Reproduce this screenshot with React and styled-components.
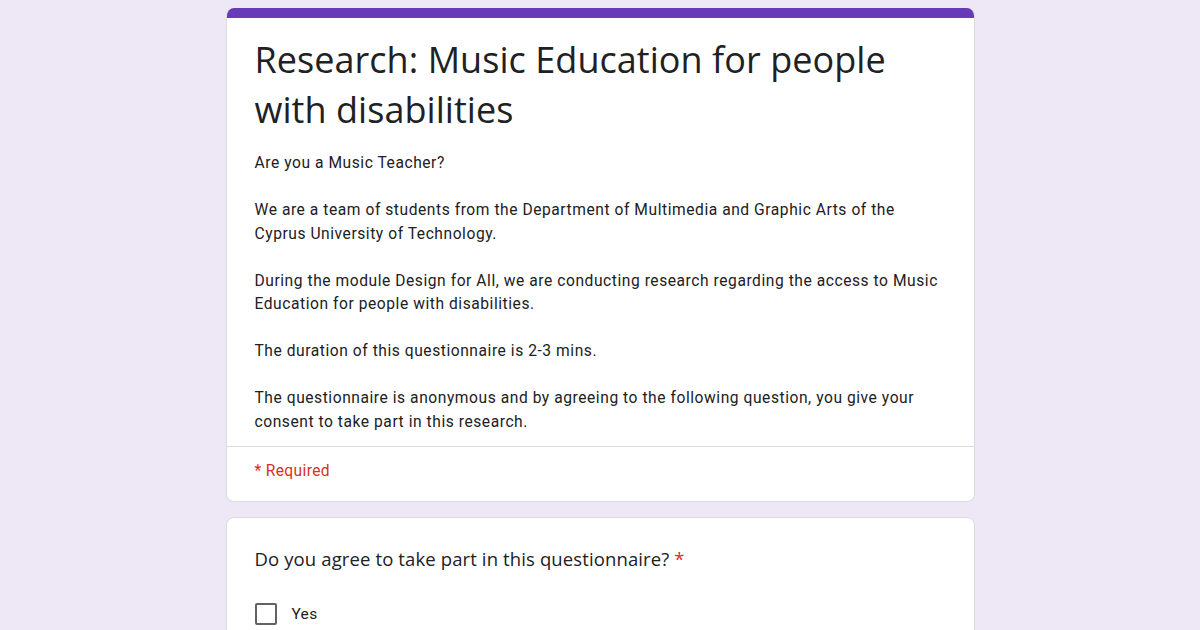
import React from "react";
import styled, { createGlobalStyle } from "styled-components";

const Global = createGlobalStyle`
  html, body { margin: 0; padding: 0; background: #ede7f6; }
  body { font-family: Roboto, "Liberation Sans", sans-serif; }
`;

const Page = styled.div`
  width: 1200px;
  height: 630px;
  overflow: hidden;
  background: #ede7f6;
  display: flex;
  flex-direction: column;
  align-items: center;
  padding-top: 8px;
  gap: 15px;
  box-sizing: border-box;
`;

const Card = styled.div`
  width: 749px;
  box-sizing: border-box;
  background: #fff;
  border: 1px solid #dadce0;
  border-radius: 8px;
  overflow: hidden;
  flex-shrink: 0;
`;

const HeaderCard = styled(Card)`
  border-top: none;
`;

const AccentBar = styled.div`
  height: 10px;
  background: #673ab7;
`;

const HeaderBody = styled.div`
  padding: 17px 28px 8px;
`;

const Title = styled.h1`
  margin: 0;
  font-family: "Open Sans", sans-serif;
  font-weight: 400;
  font-size: 36px;
  line-height: 50px;
  color: #202124;
  letter-spacing: 0.05px;
`;

const Description = styled.div`
  margin-top: 17px;
  font-family: Roboto, sans-serif;
  font-size: 15.6px;
  line-height: 23.5px;
  color: #202124;
  letter-spacing: 0.55px;
`;

const Para = styled.p`
  margin: 0 0 23.5px;
  &:last-child { margin-bottom: 0; }
`;

const Divider = styled.div`
  height: 1px;
  background: #dadce0;
  margin-top: 4px;
`;

const Required = styled.div`
  padding: 13px 28px 18px;
  font-family: Roboto, sans-serif;
  font-size: 15.6px;
  line-height: 23px;
  color: #d93025;
  letter-spacing: 0.35px;
`;

const QuestionBody = styled.div`
  padding: 29px 28px 24px;
`;

const Question = styled.div`
  font-family: "Open Sans", sans-serif;
  font-size: 18.5px;
  line-height: 24px;
  color: #202124;
  letter-spacing: 0.12px;
`;

const Star = styled.span`
  color: #d93025;
`;

const Option = styled.label`
  display: flex;
  align-items: center;
  gap: 15px;
  margin-top: 32px;
  font-family: Roboto, sans-serif;
  font-size: 15.5px;
  color: #202124;
  letter-spacing: 0.3px;
`;

const Box = styled.span`
  width: 18px;
  height: 18px;
  border: 2px solid #5f6368;
  border-radius: 2px;
  flex-shrink: 0;
`;

export default function App() {
  return (
    <>
      <Global />
      <Page>
        <HeaderCard>
          <AccentBar />
          <HeaderBody>
            <Title>Research: Music Education for people with disabilities</Title>
            <Description>
              <Para>Are you a Music Teacher?</Para>
              <Para>
                We are a team of students from the Department of Multimedia and Graphic Arts of the
                Cyprus University of Technology.
              </Para>
              <Para>
                During the module Design for All, we are conducting research regarding the access to Music
                Education for people with disabilities.
              </Para>
              <Para>The duration of this questionnaire is 2-3 mins.</Para>
              <Para>
                The questionnaire is anonymous and by agreeing to the following question, you give your
                consent to take part in this research.
              </Para>
            </Description>
          </HeaderBody>
          <Divider />
          <Required>* Required</Required>
        </HeaderCard>
        <Card>
          <QuestionBody>
            <Question>
              Do you agree to take part in this questionnaire? <Star>*</Star>
            </Question>
            <Option>
              <Box />
              Yes
            </Option>
          </QuestionBody>
        </Card>
      </Page>
    </>
  );
}
